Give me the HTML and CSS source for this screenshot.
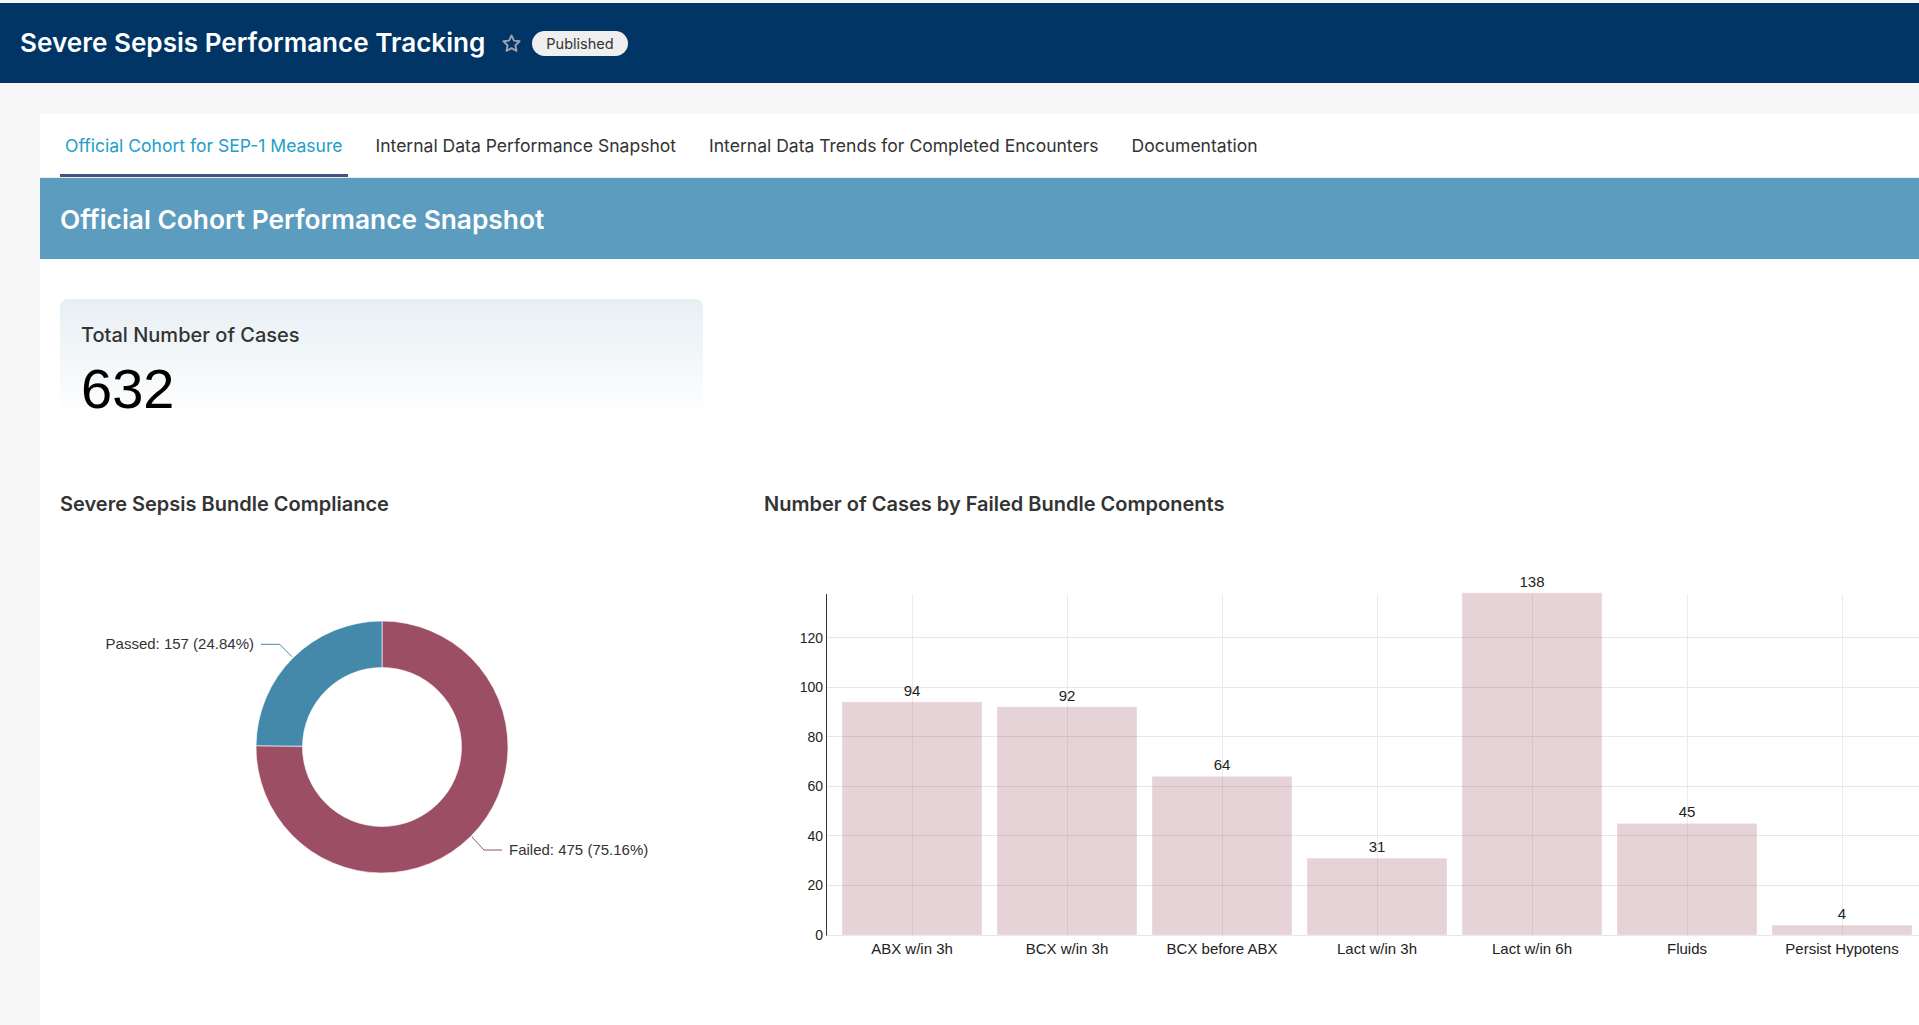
FILE: index.html
```html
<!DOCTYPE html>
<html lang="en">
<head>
<meta charset="utf-8">
<title>Severe Sepsis Performance Tracking</title>
<link rel="stylesheet" href="styles.css">
</head>
<body>
<header class="topbar">
  <h1 class="topbar-title">Severe Sepsis Performance Tracking</h1>
  <svg class="star" viewBox="0 0 24 24" width="21" height="21" aria-hidden="true">
    <path d="M12 2.8l2.8 5.9 6.4.8-4.7 4.5 1.2 6.4L12 17.3l-5.7 3.1 1.2-6.4-4.7-4.5 6.4-.8z" fill="none" stroke="#9aa3b4" stroke-width="2.2" stroke-linejoin="round"/>
  </svg>
  <span class="badge">Published</span>
</header>

<main class="page">
  <div class="panel">
    <nav class="tabs">
      <a class="tab tab-active">Official Cohort for SEP-1 Measure</a>
      <a class="tab">Internal Data Performance Snapshot</a>
      <a class="tab">Internal Data Trends for Completed Encounters</a>
      <a class="tab">Documentation</a>
    </nav>

    <div class="band">
      <h2 class="band-title">Official Cohort Performance Snapshot</h2>
    </div>

    <div class="content">
      <div class="kpi-card">
        <div class="kpi-label">Total Number of Cases</div>
        <div class="kpi-value">632</div>
      </div>

      <div class="charts">
        <section class="chart chart-donut">
          <h3 class="chart-title">Severe Sepsis Bundle Compliance</h3>
          <svg class="chart-svg" width="643" height="440" viewBox="0 0 643 440">
            <path d="M322,105 A126,126 0 1 1 196.01,229.73 L242.50,230.20 A79.5,79.5 0 1 0 322,151.5 Z" fill="#9c4f64" stroke="#ffffff" stroke-width="0.6"/>
            <path d="M322,105 A126,126 0 0 0 196.01,229.73 L242.50,230.20 A79.5,79.5 0 0 1 322,151.5 Z" fill="#4589aa" stroke="#ffffff" stroke-width="0.6"/>
            <polyline points="201,128.3 219.7,128.3 232,140.7" fill="none" stroke="#4589aa" stroke-width="1"/>
            <polyline points="411.7,320.7 424,334 442,334" fill="none" stroke="#9c4f64" stroke-width="1"/>
            <text class="pie-label" x="194" y="132.7" text-anchor="end">Passed: 157 (24.84%)</text>
            <text class="pie-label" x="449" y="339.4">Failed: 475 (75.16%)</text>
          </svg>
        </section>

        <section class="chart chart-bar">
          <h3 class="chart-title">Number of Cases by Failed Bundle Components</h3>
          <svg class="chart-svg" width="1155" height="440" viewBox="0 0 1155 440">
            <g class="grid-h" stroke="#e6e6e6" stroke-width="1">
              <line x1="62" y1="121.5" x2="1155" y2="121.5"/>
              <line x1="62" y1="171.5" x2="1155" y2="171.5"/>
              <line x1="62" y1="220.5" x2="1155" y2="220.5"/>
              <line x1="62" y1="270.5" x2="1155" y2="270.5"/>
              <line x1="62" y1="319.5" x2="1155" y2="319.5"/>
              <line x1="62" y1="369.5" x2="1155" y2="369.5"/>
              <line x1="62" y1="419.5" x2="1155" y2="419.5"/>
            </g>
            <g class="grid-v" stroke="#ebebeb" stroke-width="1">
              <line x1="148.5" y1="78" x2="148.5" y2="419"/>
              <line x1="303.5" y1="78" x2="303.5" y2="419"/>
              <line x1="458.5" y1="78" x2="458.5" y2="419"/>
              <line x1="613.5" y1="78" x2="613.5" y2="419"/>
              <line x1="768.5" y1="78" x2="768.5" y2="419"/>
              <line x1="923.5" y1="78" x2="923.5" y2="419"/>
              <line x1="1078.5" y1="78" x2="1078.5" y2="419"/>
            </g>
            <g class="bars" fill="rgba(156,79,100,0.25)" stroke="rgba(255,255,255,0.35)" stroke-width="1">
              <rect x="78" y="185.9" width="140" height="233.1"/>
              <rect x="233" y="190.8" width="140" height="228.2"/>
              <rect x="388" y="260.3" width="140" height="158.7"/>
              <rect x="543" y="342.1" width="140" height="76.9"/>
              <rect x="698" y="76.8" width="140" height="342.2"/>
              <rect x="853" y="307.4" width="140" height="111.6"/>
              <rect x="1008" y="409.1" width="140" height="9.9"/>
            </g>
            <line x1="62.5" y1="78" x2="62.5" y2="419.5" stroke="#333333" stroke-width="1"/>
            <g class="ticks" text-anchor="end">
              <text x="59" y="126.5">120</text>
              <text x="59" y="176">100</text>
              <text x="59" y="225.6">80</text>
              <text x="59" y="275.2">60</text>
              <text x="59" y="324.8">40</text>
              <text x="59" y="374.4">20</text>
              <text x="59" y="424">0</text>
            </g>
            <g class="values" text-anchor="middle">
              <text x="148" y="179.9">94</text>
              <text x="303" y="184.8">92</text>
              <text x="458" y="254.3">64</text>
              <text x="613" y="336.1">31</text>
              <text x="768" y="70.8">138</text>
              <text x="923" y="301.4">45</text>
              <text x="1078" y="403.1">4</text>
            </g>
            <g class="xlabels" text-anchor="middle">
              <text x="148" y="438">ABX w/in 3h</text>
              <text x="303" y="438">BCX w/in 3h</text>
              <text x="458" y="438">BCX before ABX</text>
              <text x="613" y="438">Lact w/in 3h</text>
              <text x="768" y="438">Lact w/in 6h</text>
              <text x="923" y="438">Fluids</text>
              <text x="1078" y="438">Persist Hypotens</text>
            </g>
          </svg>
        </section>
      </div>
    </div>
  </div>
</main>
</body>
</html>
```

FILE: styles.css
```css
html, body {
  margin: 0;
  padding: 0;
  overflow: hidden;
}

body {
  background: #f7f7f7;
  font-family: Inter, "Noto Sans", "Liberation Sans", sans-serif;
  color: #333333;
  width: 1919px;
  height: 1025px;
}

.topbar {
  margin-top: 3px;
  height: 80px;
  background: #003566;
  display: flex;
  align-items: center;
  padding-left: 20px;
  padding-top: 1px;
  box-sizing: border-box;
}

.topbar-title {
  margin: 0;
  font-size: 26.1px;
  font-weight: 600;
  color: #ffffff;
  line-height: 1;
}

.star {
  display: block;
  margin-left: 16px;
}

.badge {
  margin-left: 10px;
  height: 25px;
  padding: 0 14px;
  border-radius: 13px;
  background: #efefef;
  color: #333333;
  font-size: 14.5px;
  display: flex;
  align-items: center;
  box-sizing: border-box;
}

.page {
  padding: 31px 0 0 40px;
}

.panel {
  background: #ffffff;
  height: 911px;
  overflow: hidden;
}

.tabs {
  display: flex;
  gap: 23px;
  padding-left: 20px;
  height: 64px;
  box-sizing: border-box;
  border-bottom: 1px solid #e6ebf0;
}

.tab {
  height: 63px;
  box-sizing: border-box;
  padding: 3px 5px 0;
  border-bottom: 3px solid transparent;
  display: flex;
  align-items: center;
  font-size: 17.55px;
  color: #333333;
  white-space: nowrap;
}

.tab-active {
  color: #239dca;
  border-bottom-color: #474f7f;
}

.band {
  height: 81px;
  box-sizing: border-box;
  background: #5b9cbf;
  display: flex;
  align-items: center;
  padding-left: 20px;
  padding-top: 3px;
}

.band-title {
  margin: 0;
  font-size: 26.3px;
  font-weight: 600;
  color: #ffffff;
  line-height: 1;
}

.content {
  padding: 40px 20px 0 20px;
}

.kpi-card {
  width: 643px;
  height: 120px;
  box-sizing: border-box;
  border-radius: 8px;
  background: linear-gradient(180deg, #e7eff3 0%, #ffffff 100%);
  padding: 24px 21px 0;
}

.kpi-label {
  font-size: 20px;
  font-weight: 500;
  color: #333333;
  line-height: 24px;
}

.kpi-value {
  font-family: "Liberation Sans", Arial, sans-serif;
  font-size: 56px;
  line-height: 60px;
  color: #000000;
  margin-top: 12px;
}

.charts {
  display: flex;
  gap: 61px;
  margin-top: 73px;
}

.chart-donut {
  width: 643px;
  flex: none;
}

.chart-bar {
  flex: 1;
  min-width: 0;
}

.chart-title {
  margin: 0;
  font-size: 20px;
  font-weight: 600;
  line-height: 24px;
  color: #333333;
}

.chart-svg {
  display: block;
  overflow: visible;
  font-family: "Liberation Sans", Arial, sans-serif;
}

.pie-label {
  font-size: 15px;
  fill: #333333;
}

.ticks text {
  font-size: 14px;
  fill: #222222;
}

.values text,
.xlabels text {
  font-size: 15px;
  fill: #222222;
}
```
